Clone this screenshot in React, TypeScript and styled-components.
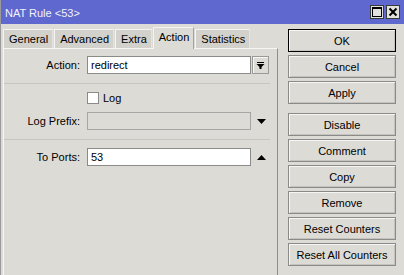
import styled, { createGlobalStyle } from 'styled-components'

const GlobalStyle = createGlobalStyle`
  html, body {
    margin: 0;
    padding: 0;
    background: #dcdbd6;
  }
  body {
    font-family: 'Liberation Sans', Arial, sans-serif;
    font-size: 11px;
    color: #000;
  }
`

const tabs = ['General', 'Advanced', 'Extra', 'Action', 'Statistics']
const mainButtons = ['OK', 'Cancel', 'Apply']
const moreButtons = ['Disable', 'Comment', 'Copy', 'Remove', 'Reset Counters', 'Reset All Counters']

const DownArrow = () => (
  <svg width="9" height="5" viewBox="0 0 9 5">
    <polygon points="0,0 9,0 4.5,5" fill="#000" />
  </svg>
)

const UpArrow = () => (
  <svg width="9" height="5" viewBox="0 0 9 5">
    <polygon points="0,5 9,5 4.5,0" fill="#000" />
  </svg>
)

const DropIcon = () => (
  <svg width="9" height="9" viewBox="0 0 9 9">
    <rect x="1" y="1" width="7" height="1" fill="#000" />
    <polygon points="0.5,3 8.5,3 4.5,7" fill="#000" />
    <rect x="3.5" y="6" width="2" height="2" fill="#000" />
  </svg>
)

const App = () => {
  return (
    <Window>
      <GlobalStyle />
      <TitleBar>
        <Title>NAT Rule &lt;53&gt;</Title>
        <TitleButtons>
          <TitleButton>
            <svg width="10" height="10" viewBox="0 0 10 10">
              <rect x="0.5" y="0.5" width="9" height="9" fill="none" stroke="#000" />
              <rect x="0" y="0" width="10" height="2" fill="#000" />
            </svg>
          </TitleButton>
          <TitleButton>
            <svg width="10" height="10" viewBox="0 0 10 10">
              <path d="M1.5 1.5 L8.5 8.5 M8.5 1.5 L1.5 8.5" stroke="#000" strokeWidth="2" />
            </svg>
          </TitleButton>
        </TitleButtons>
      </TitleBar>
      <Body>
        <LeftPane>
          <TabRow>
            {tabs.map(t => (
              <Tab key={t} $active={t === 'Action'}>{t}</Tab>
            ))}
          </TabRow>
          <Panel>
            <Row>
              <Label>Action:</Label>
              <Input>redirect</Input>
              <DropButton><DropIcon /></DropButton>
            </Row>
            <Separator />
            <CheckRow>
              <Check />
              <span>Log</span>
            </CheckRow>
            <Row>
              <Label>Log Prefix:</Label>
              <Input $disabled />
              <Arrow><DownArrow /></Arrow>
            </Row>
            <Separator />
            <Row>
              <Label>To Ports:</Label>
              <Input>53</Input>
              <Arrow><UpArrow /></Arrow>
            </Row>
          </Panel>
        </LeftPane>
        <RightPane>
          <ButtonGroup>
            {mainButtons.map(b => (
              <Button key={b} $default={b === 'OK'}>{b}</Button>
            ))}
          </ButtonGroup>
          <ButtonGroup>
            {moreButtons.map(b => (
              <Button key={b}>{b}</Button>
            ))}
          </ButtonGroup>
        </RightPane>
      </Body>
    </Window>
  )
}

export default App

const Window = styled.div`
  width: 404px;
  height: 275px;
  overflow: hidden;
  display: flex;
  flex-direction: column;
  background: #dcdbd6;
  border-left: 1px solid #9a9a9a;
  box-sizing: border-box;
`

const TitleBar = styled.div`
  height: 24px;
  flex: none;
  display: flex;
  align-items: center;
  justify-content: space-between;
  background: #5f68cf;
  padding: 0 4px 0 5px;
  margin-left: -1px;
`

const Title = styled.div`
  color: #f2f2fa;
  font-size: 11px;
  padding-top: 1px;
`

const TitleButtons = styled.div`
  display: flex;
  gap: 2px;
`

const TitleButton = styled.div`
  width: 14px;
  height: 14px;
  box-sizing: border-box;
  border: 1px solid #3a3a3a;
  background: #e2e1dd;
  display: flex;
  align-items: center;
  justify-content: center;
`

const Body = styled.div`
  flex: 1;
  display: flex;
  min-height: 0;
`

const LeftPane = styled.div`
  width: 277px;
  flex: none;
  box-sizing: border-box;
  padding-left: 2px;
  display: flex;
  flex-direction: column;
`

const TabRow = styled.div`
  height: 24px;
  display: flex;
  align-items: flex-end;
  gap: 1px;
`

const Tab = styled.div<{ $active?: boolean }>`
  height: ${p => (p.$active ? 22 : 19)}px;
  padding: 0 4px 0 5px;
  box-sizing: border-box;
  display: flex;
  align-items: center;
  padding-bottom: ${p => (p.$active ? 3 : 1)}px;
  background: ${p => (p.$active ? '#dcdbd6' : '#d2d1cc')};
  border-top: 1px solid #f4f4f2;
  border-left: 1px solid #f4f4f2;
  border-right: 1px solid ${p => (p.$active ? '#a3a3a0' : '#e4e3df')};
  margin-bottom: ${p => (p.$active ? -1 : 0)}px;
  position: relative;
`

const Panel = styled.div`
  flex: 1;
  border-top: 1px solid #f6f6f4;
  border-left: 1px solid #f6f6f4;
  border-right: 1px solid #8e8e8c;
  padding: 7px 0 0 0;
  display: flex;
  flex-direction: column;
`

const Row = styled.div`
  display: flex;
  align-items: center;
  height: 18px;
`

const Label = styled.div`
  width: 76px;
  text-align: right;
  margin-right: 7px;
`

const Input = styled.div<{ $disabled?: boolean }>`
  width: 164px;
  height: 18px;
  box-sizing: border-box;
  border: 1px solid ${p => (p.$disabled ? '#a6a6a4' : '#8a8a88')};
  background: ${p => (p.$disabled ? '#dcdbd6' : '#fff')};
  padding: 0 3px;
  display: flex;
  align-items: center;
`

const DropButton = styled.div`
  width: 17px;
  height: 18px;
  margin-left: 1px;
  box-sizing: border-box;
  border: 1px solid #9a9a98;
  box-shadow: inset 1px 1px 0 #f6f6f4;
  display: flex;
  align-items: center;
  justify-content: center;
`

const Arrow = styled.div`
  width: 18px;
  display: flex;
  justify-content: center;
  margin-left: 1px;
`

const Separator = styled.div`
  height: 1px;
  width: 266px;
  background: #c6c5c1;
  margin: 9px 0 8px;
`

const CheckRow = styled.div`
  display: flex;
  align-items: center;
  gap: 4px;
  height: 12px;
  padding-left: 83px;
  margin-bottom: 8px;
`

const Check = styled.div`
  width: 12px;
  height: 12px;
  box-sizing: border-box;
  border: 1px solid #8a8a88;
  background: #fff;
`

const RightPane = styled.div`
  flex: 1;
  padding: 5px 0 0 10px;
  display: flex;
  flex-direction: column;
  gap: 9px;
`

const ButtonGroup = styled.div`
  display: flex;
  flex-direction: column;
  gap: 3px;
`

const Button = styled.div<{ $default?: boolean }>`
  width: 108px;
  height: 23px;
  box-sizing: border-box;
  border: 1px solid ${p => (p.$default ? '#000' : '#8a8a88')};
  box-shadow: inset 1px 1px 0 #f6f6f4, inset -1px -1px 0 #c4c3bf;
  display: flex;
  align-items: center;
  justify-content: center;
`
